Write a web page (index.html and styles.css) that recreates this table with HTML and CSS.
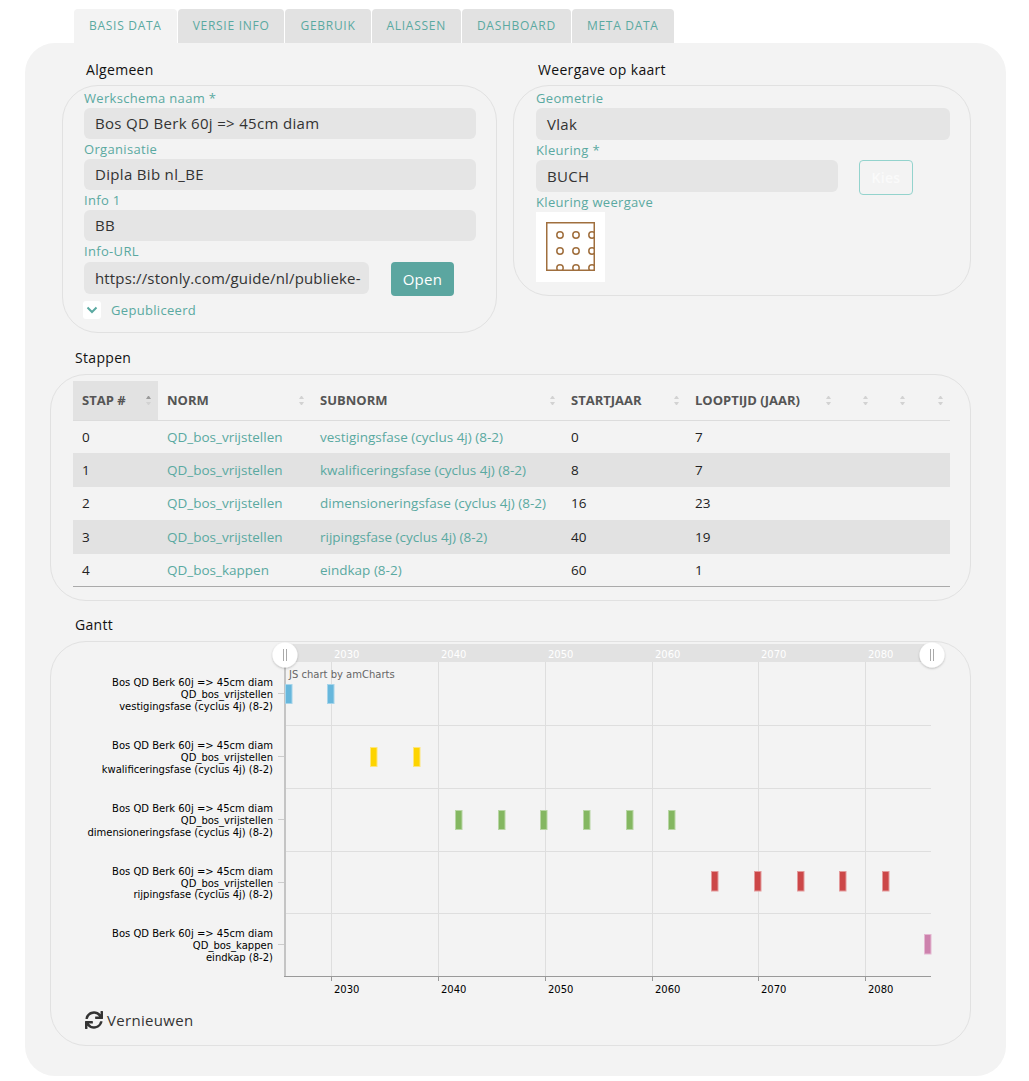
FILE: index.html
```html
<!DOCTYPE html>
<html lang="nl">
<head>
<meta charset="utf-8">
<title>Werkschema</title>
<link rel="stylesheet" href="styles.css">
</head>
<body>
<div class="page">
  <nav class="tabs">
    <div class="tab active">Basis data</div>
    <div class="tab">Versie info</div>
    <div class="tab">Gebruik</div>
    <div class="tab">Aliassen</div>
    <div class="tab">Dashboard</div>
    <div class="tab">Meta data</div>
  </nav>
  <main class="panel">
    <div class="top-row">
      <section>
        <div class="section-title">Algemeen</div>
        <div class="box box-general">
          <div class="label">Werkschema naam *</div>
          <div class="input">Bos QD Berk 60j =&gt; 45cm diam</div>
          <div class="label">Organisatie</div>
          <div class="input">Dipla Bib nl_BE</div>
          <div class="label">Info 1</div>
          <div class="input">BB</div>
          <div class="label">Info-URL</div>
          <div class="url-row">
            <div class="input input-url"><span class="url-text">https://stonly.com/guide/nl/publieke-</span></div>
            <button class="btn btn-primary">Open</button>
          </div>
          <div class="check-row">
            <span class="checkbox"><svg width="12" height="8" viewBox="0 0 12 8"><polyline points="1.5,1.5 6,6 10.5,1.5" fill="none" stroke="#5aa9a1" stroke-width="2"/></svg></span>
            <span class="check-label">Gepubliceerd</span>
          </div>
        </div>
      </section>
      <section>
        <div class="section-title">Weergave op kaart</div>
        <div class="box box-map">
          <div class="label">Geometrie</div>
          <div class="input input-tall">Vlak</div>
          <div class="label">Kleuring *</div>
          <div class="color-row">
            <div class="input input-color">BUCH</div>
            <button class="btn btn-outline">Kies</button>
          </div>
          <div class="label">Kleuring weergave</div>
          <div class="swatch">
            <svg width="70" height="70" viewBox="0 0 70 70">
              <defs><clipPath id="sq"><rect x="10" y="10" width="49" height="49"/></clipPath></defs>
              <g clip-path="url(#sq)" fill="none" stroke="#a06f3e" stroke-width="1.5">
                <circle cx="24" cy="23" r="3.2"/><circle cx="40" cy="23" r="3.2"/><circle cx="56" cy="23" r="3.2"/>
                <circle cx="24" cy="39" r="3.2"/><circle cx="40" cy="39" r="3.2"/><circle cx="56" cy="39" r="3.2"/>
                <circle cx="24" cy="56" r="3.2"/><circle cx="40" cy="56" r="3.2"/><circle cx="56" cy="56" r="3.2"/>
              </g>
              <rect x="10.75" y="10.75" width="47.5" height="47.5" fill="none" stroke="#a06f3e" stroke-width="1.5"/>
            </svg>
          </div>
        </div>
      </section>
    </div>

    <section class="section-steps">
      <div class="section-title">Stappen</div>
      <div class="box box-table">
        <table class="steps">
          <colgroup>
            <col style="width:85px"><col style="width:153px"><col style="width:251px"><col style="width:124px"><col style="width:152px"><col style="width:37px"><col style="width:37px"><col style="width:38px">
          </colgroup>
          <thead>
            <tr>
              <th class="sorted"><div class="th-in"><span>Stap #</span><i class="sort asc"></i></div></th>
              <th><div class="th-in"><span>Norm</span><i class="sort"></i></div></th>
              <th><div class="th-in"><span>Subnorm</span><i class="sort"></i></div></th>
              <th><div class="th-in"><span>Startjaar</span><i class="sort"></i></div></th>
              <th><div class="th-in"><span>Looptijd (jaar)</span><i class="sort"></i></div></th>
              <th><div class="th-in"><span></span><i class="sort"></i></div></th>
              <th><div class="th-in"><span></span><i class="sort"></i></div></th>
              <th><div class="th-in"><span></span><i class="sort"></i></div></th>
            </tr>
          </thead>
          <tbody>
            <tr><td>0</td><td class="link">QD_bos_vrijstellen</td><td class="link">vestigingsfase (cyclus 4j) (8-2)</td><td>0</td><td>7</td><td></td><td></td><td></td></tr>
            <tr class="odd"><td>1</td><td class="link">QD_bos_vrijstellen</td><td class="link">kwalificeringsfase (cyclus 4j) (8-2)</td><td>8</td><td>7</td><td></td><td></td><td></td></tr>
            <tr><td>2</td><td class="link">QD_bos_vrijstellen</td><td class="link">dimensioneringsfase (cyclus 4j) (8-2)</td><td>16</td><td>23</td><td></td><td></td><td></td></tr>
            <tr class="odd"><td>3</td><td class="link">QD_bos_vrijstellen</td><td class="link">rijpingsfase (cyclus 4j) (8-2)</td><td>40</td><td>19</td><td></td><td></td><td></td></tr>
            <tr class="last"><td>4</td><td class="link">QD_bos_kappen</td><td class="link">eindkap (8-2)</td><td>60</td><td>1</td><td></td><td></td><td></td></tr>
          </tbody>
        </table>
      </div>
    </section>

    <section class="section-gantt">
      <div class="section-title">Gantt</div>
      <div class="box box-gantt">
        <svg class="chart" width="919" height="360" viewBox="0 0 919 360">
          <defs>
            <filter id="sh" x="-50%" y="-50%" width="200%" height="200%">
              <feDropShadow dx="0" dy="1" stdDeviation="1" flood-color="#000" flood-opacity="0.25"/>
            </filter>
          </defs>
          <rect x="234" y="2" width="647" height="18" fill="#e2e2e2"/>
          <g class="sb-label">
            <text x="283" y="15.5">2030</text><text x="390" y="15.5">2040</text><text x="497" y="15.5">2050</text>
            <text x="604" y="15.5">2060</text><text x="710" y="15.5">2070</text><text x="817" y="15.5">2080</text>
          </g>
          <g stroke="#dedede" stroke-width="1">
            <line x1="280.5" y1="20" x2="280.5" y2="334"/><line x1="387.5" y1="20" x2="387.5" y2="334"/>
            <line x1="494.5" y1="20" x2="494.5" y2="334"/><line x1="601.5" y1="20" x2="601.5" y2="334"/>
            <line x1="707.5" y1="20" x2="707.5" y2="334"/><line x1="814.5" y1="20" x2="814.5" y2="334"/>
            <line x1="234" y1="83.5" x2="880" y2="83.5"/><line x1="234" y1="146.5" x2="880" y2="146.5"/>
            <line x1="234" y1="209.5" x2="880" y2="209.5"/><line x1="234" y1="271.5" x2="880" y2="271.5"/>
          </g>
          <g stroke="#999" stroke-width="1">
            <line x1="280.5" y1="334" x2="280.5" y2="339"/><line x1="387.5" y1="334" x2="387.5" y2="339"/>
            <line x1="494.5" y1="334" x2="494.5" y2="339"/><line x1="601.5" y1="334" x2="601.5" y2="339"/>
            <line x1="707.5" y1="334" x2="707.5" y2="339"/><line x1="814.5" y1="334" x2="814.5" y2="339"/>
          </g>
          <line x1="234" y1="20" x2="234" y2="334.5" stroke="#c4c4c4" stroke-width="2"/>
          <line x1="233" y1="334.5" x2="880" y2="334.5" stroke="#999" stroke-width="1"/>
          <g stroke="#ccc">
            <line x1="227" y1="51.5" x2="233" y2="51.5"/><line x1="227" y1="114.5" x2="233" y2="114.5"/>
            <line x1="227" y1="177.5" x2="233" y2="177.5"/><line x1="227" y1="240.5" x2="233" y2="240.5"/>
            <line x1="227" y1="302.5" x2="233" y2="302.5"/>
          </g>
          <text class="credit" x="238" y="36">JS chart by amCharts</text>
          <g class="cat-label" text-anchor="end">
            <text x="222" y="44">Bos QD Berk 60j =&gt; 45cm diam</text>
            <text x="222" y="56">QD_bos_vrijstellen</text>
            <text x="222" y="67.5">vestigingsfase (cyclus 4j) (8-2)</text>
            <text x="222" y="107">Bos QD Berk 60j =&gt; 45cm diam</text>
            <text x="222" y="119">QD_bos_vrijstellen</text>
            <text x="222" y="130.5">kwalificeringsfase (cyclus 4j) (8-2)</text>
            <text x="222" y="170">Bos QD Berk 60j =&gt; 45cm diam</text>
            <text x="222" y="182">QD_bos_vrijstellen</text>
            <text x="222" y="193.5">dimensioneringsfase (cyclus 4j) (8-2)</text>
            <text x="222" y="232.5">Bos QD Berk 60j =&gt; 45cm diam</text>
            <text x="222" y="244.5">QD_bos_vrijstellen</text>
            <text x="222" y="256">rijpingsfase (cyclus 4j) (8-2)</text>
            <text x="222" y="295">Bos QD Berk 60j =&gt; 45cm diam</text>
            <text x="222" y="307">QD_bos_kappen</text>
            <text x="222" y="318.5">eindkap (8-2)</text>
          </g>
          <g fill="#67b7dc" stroke="#a6d4ea">
            <rect x="234.5" y="42.5" width="6.5" height="19"/><rect x="276.5" y="42.5" width="6.5" height="19"/>
          </g>
          <g fill="#fdd400" stroke="#fee57a">
            <rect x="319.5" y="105.5" width="6.5" height="19"/><rect x="362.5" y="105.5" width="6.5" height="19"/>
          </g>
          <g fill="#84b761" stroke="#b8d6a4">
            <rect x="404.5" y="168.5" width="6.5" height="19"/><rect x="447.5" y="168.5" width="6.5" height="19"/>
            <rect x="489.5" y="168.5" width="6.5" height="19"/><rect x="532.5" y="168.5" width="6.5" height="19"/>
            <rect x="575.5" y="168.5" width="6.5" height="19"/><rect x="617.5" y="168.5" width="6.5" height="19"/>
          </g>
          <g fill="#cc4748" stroke="#e39a9b">
            <rect x="660.5" y="229.5" width="6.5" height="19.5"/><rect x="703.5" y="229.5" width="6.5" height="19.5"/>
            <rect x="746.5" y="229.5" width="6.5" height="19.5"/><rect x="788.5" y="229.5" width="6.5" height="19.5"/>
            <rect x="831.5" y="229.5" width="6.5" height="19.5"/>
          </g>
          <g fill="#cd82ad" stroke="#e4b8d1">
            <rect x="873.5" y="292.5" width="6.5" height="19.5"/>
          </g>
          <g class="axis-label">
            <text x="283" y="351">2030</text><text x="390" y="351">2040</text><text x="497" y="351">2050</text>
            <text x="604" y="351">2060</text><text x="710" y="351">2070</text><text x="817" y="351">2080</text>
          </g>
          <g filter="url(#sh)"><circle cx="234" cy="13" r="12.5" fill="#fff"/><circle cx="881" cy="13" r="12.5" fill="#fff"/></g>
          <g stroke="#aaa" stroke-width="1">
            <line x1="232.5" y1="7" x2="232.5" y2="19"/><line x1="235.5" y1="7" x2="235.5" y2="19"/>
            <line x1="879.5" y1="7" x2="879.5" y2="19"/><line x1="882.5" y1="7" x2="882.5" y2="19"/>
          </g>
        </svg>
        <div class="refresh">
          <svg width="18" height="18" viewBox="0 0 512 512"><path fill="#333" d="M440.65 12.57l4 82.77A247.16 247.16 0 0 0 255.83 8C134.73 8 33.91 94.92 12.29 209.82A12 12 0 0 0 24.09 224h49.05a12 12 0 0 0 11.67-9.26 175.91 175.91 0 0 1 317-56.94l-101.46-4.86a12 12 0 0 0-12.57 12v47.41a12 12 0 0 0 12 12H500a12 12 0 0 0 12-12V12a12 12 0 0 0-12-12h-47.37a12 12 0 0 0-11.98 12.57zM255.83 432a175.61 175.61 0 0 1-146-77.8l101.8 4.87a12 12 0 0 0 12.57-12v-47.4a12 12 0 0 0-12-12H12a12 12 0 0 0-12 12V500a12 12 0 0 0 12 12h47.35a12 12 0 0 0 12-12.6l-4.15-82.57A247.17 247.17 0 0 0 255.83 504c121.11 0 221.930-86.92 243.55-201.82a12 12 0 0 0-11.8-14.18h-49.05a12 12 0 0 0-11.67 9.26A175.86 175.86 0 0 1 255.83 432z"/></svg>
          <span>Vernieuwen</span>
        </div>
      </div>
    </section>
  </main>
</div>
</body>
</html>
```

FILE: styles.css
```css
* { box-sizing: border-box; }

body {
  margin: 0;
  background: #ffffff;
  font-family: "Open Sans", "Noto Sans", sans-serif;
  color: #333;
  letter-spacing: 0.02em;
}

.page {
  padding-top: 9px;
  padding-left: 25px;
}

.tabs {
  display: flex;
  gap: 1px;
  margin-left: 49px;
}

.tab {
  height: 34px;
  line-height: 34px;
  padding: 0 15px;
  background: #e2e2e2;
  border-radius: 4px 4px 0 0;
  font-size: 12px;
  text-transform: uppercase;
  color: #5aa9a1;
  letter-spacing: 0.06em;
}

.tab.active { background: #f3f3f3; }

.panel {
  display: block;
  width: 981px;
  background: #f3f3f3;
  border-radius: 30px;
  padding: 18px 35px 30px 25px;
}

.section-title {
  font-size: 14px;
  line-height: 17px;
  color: #111;
  padding-left: 25px;
  margin-bottom: 7px;
}

.top-row {
  display: grid;
  grid-template-columns: 435px 458px;
  column-gap: 16px;
  margin-left: 12px;
}

.top-row .section-title { padding-left: 24px; }
.top-row section:nth-child(2) .section-title { padding-left: 25px; }

.box {
  border: 1px solid #e1e1e1;
  border-radius: 36px;
}

.box-general { padding: 2px 20px 13px 21px; }
.box-map { padding: 2px 20px 13px 22px; }

.label {
  font-size: 13px;
  line-height: 20px;
  height: 20px;
  color: #5aa9a1;
}

.input {
  height: 31px;
  line-height: 31px;
  background: #e5e5e5;
  border-radius: 6px;
  padding: 0 11px;
  font-size: 15px;
  color: #333;
  white-space: nowrap;
  overflow: hidden;
}

.input-tall { height: 32px; line-height: 32px; }

.url-row {
  display: flex;
  align-items: flex-start;
  gap: 22px;
  margin-top: 1px;
}

.input-url {
  width: 285px;
  height: 32px;
  line-height: 32px;
}

.url-text { letter-spacing: 0.01em; }

.btn {
  font-family: "Open Sans", "Noto Sans", sans-serif;
  font-size: 15px;
  border-radius: 4px;
  letter-spacing: 0.02em;
}

.btn-primary {
  width: 63px;
  height: 34px;
  background: #5ba6a0;
  border: none;
  color: #fff;
}

.check-row {
  display: flex;
  align-items: center;
  gap: 10px;
  margin-top: 5px;
  margin-left: -1px;
}

.checkbox {
  width: 18px;
  height: 18px;
  background: #fff;
  border-radius: 3px;
  display: flex;
  align-items: center;
  justify-content: center;
}

.check-label {
  font-size: 13px;
  color: #5aa9a1;
}

.color-row {
  display: flex;
  align-items: flex-start;
  gap: 21px;
  height: 32px;
}

.input-color { width: 302px; height: 32px; line-height: 32px; }

.btn-outline {
  width: 54px;
  height: 35px;
  background: transparent;
  border: 1px solid #93d3cd;
  color: #fafafa;
  font-size: 14px;
  font-weight: 600;
}

.swatch {
  width: 69px;
  height: 70px;
  background: #fff;
}
.swatch svg { display: block; }

.section-steps { margin-top: 16px; }
.section-steps .section-title { margin-bottom: 8px; }

.box-table { padding: 6px 20px 13px 22px; }

.steps {
  width: 877px;
  border-collapse: collapse;
  table-layout: fixed;
  font-size: 13.5px;
  letter-spacing: 0;
}

.steps th {
  height: 39px;
  padding: 0 7px 0 9px;
  text-align: left;
  font-size: 13px;
  font-weight: 700;
  color: #555;
  text-transform: uppercase;
  border-bottom: 1px solid #dcdcdc;
  white-space: nowrap;
}

.steps th.sorted { background: #e2e2e2; }

.th-in {
  display: flex;
  align-items: center;
  justify-content: space-between;
}

.sort {
  display: flex;
  flex-direction: column;
  gap: 3px;
  width: 5px;
}
.sort::before, .sort::after {
  content: "";
  display: block;
  border-left: 2.5px solid transparent;
  border-right: 2.5px solid transparent;
}
.sort::before { border-bottom: 3px solid #d2d2d2; }
.sort::after { border-top: 3px solid #d2d2d2; }
.sort.asc::before { border-bottom-color: #9a9a9a; }

.steps td {
  height: 33.4px;
  padding: 0 9px;
  color: #222;
  white-space: nowrap;
}

.steps td.link { color: #5aa9a1; }
.steps tr.odd td { background: #e2e2e2; }
.steps tr.last td { border-bottom: 1px solid #aaa; }

.section-gantt { margin-top: 15px; }
.section-gantt .section-title { margin-bottom: 8px; }

.box-gantt { padding: 0 0 15px 0; }

.chart { display: block; }
.chart text { font-family: "DejaVu Sans", Verdana, sans-serif; font-size: 10px; letter-spacing: 0; }
.chart .sb-label text { fill: #fff; }
.chart .cat-label text { fill: #000; }
.chart .axis-label text { fill: #000; }
.chart .credit { fill: #666; }

.refresh {
  display: flex;
  align-items: center;
  gap: 4px;
  margin-top: 8px;
  padding-left: 34px;
  height: 20px;
  font-size: 15px;
  color: #333;
}
.refresh svg { display: block; }
```
